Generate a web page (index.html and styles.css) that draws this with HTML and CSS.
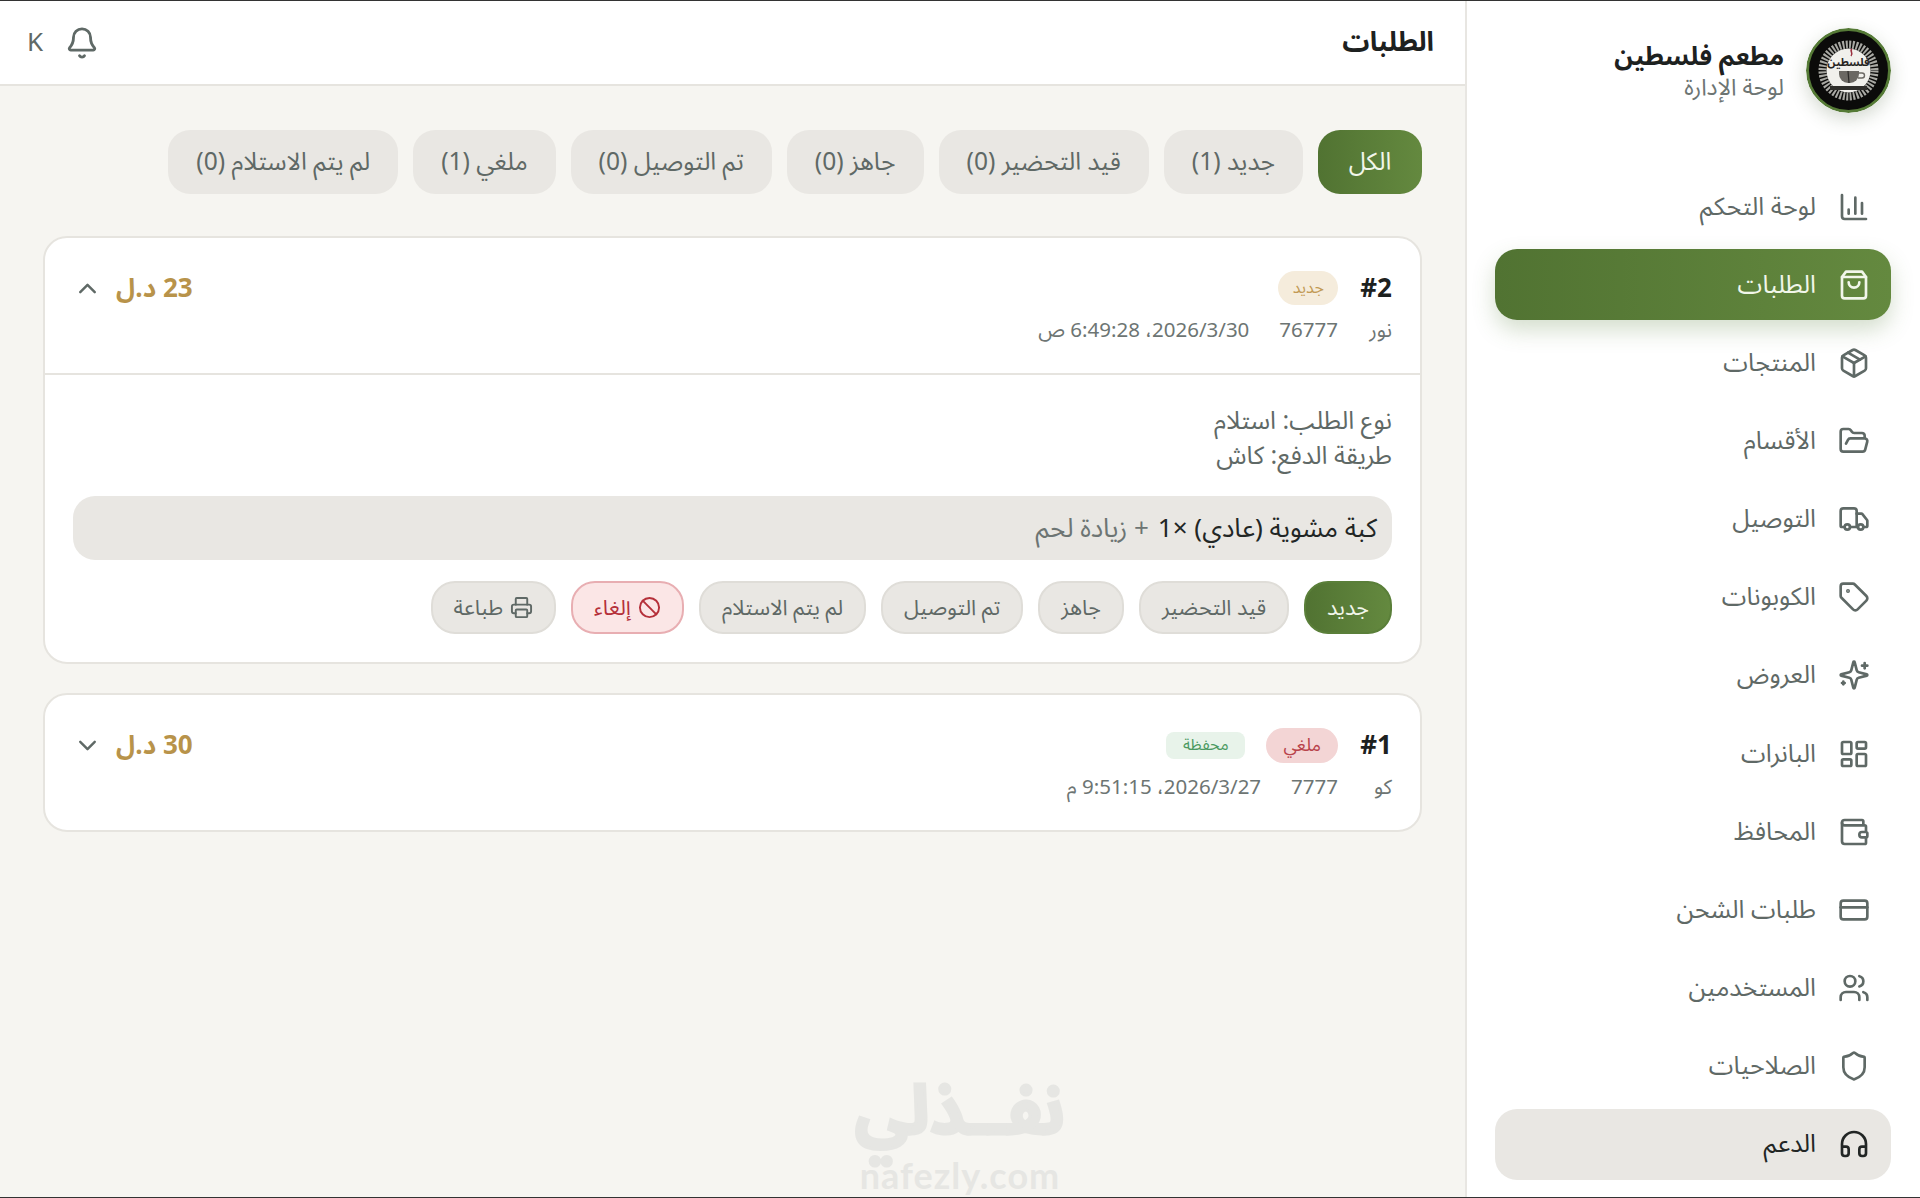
FILE: index.html
```html
<!DOCTYPE html>
<html lang="ar" dir="rtl">
<head>
<meta charset="UTF-8">
<title>الطلبات</title>
<link rel="stylesheet" href="styles.css">
</head>
<body>
<div class="app">

  <!-- القائمة الجانبية -->
  <aside class="sidebar">
    <div class="brand">
      <svg class="avatar" viewBox="0 0 85 85" aria-hidden="true">
        <circle cx="42.5" cy="42.5" r="41" fill="#0b0b0a" stroke="#557a36" stroke-width="3"/>
        <circle cx="42.5" cy="42.5" r="26" fill="none" stroke="#a8a8a3" stroke-width="8" stroke-dasharray="2 1.4"/>
        <circle cx="42.5" cy="42.5" r="22" fill="#f1f0ec"/>
        <text class="avatar-ar" x="42.5" y="38" text-anchor="middle">فلسطين</text>
        <path d="M46 21c-3 2 2 4-1 7" fill="none" stroke="#9c3140" stroke-width="1.6"/>
        <path d="M33 43h20v3a9 9 0 0 1-9 9h-2a9 9 0 0 1-9-9z" fill="#6b6863"/>
        <path d="M53 45h3a2.5 2.5 0 0 1 0 5h-4" fill="none" stroke="#6b6863" stroke-width="1.4"/>
        <path d="M42 43l1 12" stroke="#2b2a28" stroke-width="1.2"/>
        <rect x="24" y="58" width="37" height="4" fill="#2f2e2b"/>
      </svg>
      <div class="brand-text">
        <div class="brand-name">مطعم فلسطين</div>
        <div class="brand-sub">لوحة الإدارة</div>
      </div>
    </div>

    <nav class="nav">
      <a class="nav-item">
        <svg class="icon" viewBox="0 0 24 24"><path d="M3 3v16a2 2 0 0 0 2 2h16"/><path d="M18 17V9"/><path d="M13 17V5"/><path d="M8 17v-3"/></svg>
        <span>لوحة التحكم</span>
      </a>
      <a class="nav-item active">
        <svg class="icon" viewBox="0 0 24 24"><path d="M6 2 3 6v14a2 2 0 0 0 2 2h14a2 2 0 0 0 2-2V6l-3-4Z"/><path d="M3 6h18"/><path d="M16 10a4 4 0 0 1-8 0"/></svg>
        <span>الطلبات</span>
      </a>
      <a class="nav-item">
        <svg class="icon" viewBox="0 0 24 24"><path d="m7.5 4.27 9 5.15"/><path d="M21 8a2 2 0 0 0-1-1.73l-7-4a2 2 0 0 0-2 0l-7 4A2 2 0 0 0 3 8v8a2 2 0 0 0 1 1.73l7 4a2 2 0 0 0 2 0l7-4A2 2 0 0 0 21 16Z"/><path d="m3.3 7 8.7 5 8.7-5"/><path d="M12 22V12"/></svg>
        <span>المنتجات</span>
      </a>
      <a class="nav-item">
        <svg class="icon" viewBox="0 0 24 24"><path d="m6 14 1.5-2.9A2 2 0 0 1 9.24 10H20a2 2 0 0 1 1.94 2.5l-1.54 6a2 2 0 0 1-1.95 1.5H4a2 2 0 0 1-2-2V5a2 2 0 0 1 2-2h3.9a2 2 0 0 1 1.69.9l.81 1.2a2 2 0 0 0 1.67.9H18a2 2 0 0 1 2 2v2"/></svg>
        <span>الأقسام</span>
      </a>
      <a class="nav-item">
        <svg class="icon" viewBox="0 0 24 24"><path d="M14 18V6a2 2 0 0 0-2-2H4a2 2 0 0 0-2 2v11a1 1 0 0 0 1 1h2"/><path d="M15 18H9"/><path d="M19 18h2a1 1 0 0 0 1-1v-3.65a1 1 0 0 0-.22-.624l-3.48-4.35A1 1 0 0 0 17.52 8H14"/><circle cx="17" cy="18" r="2"/><circle cx="7" cy="18" r="2"/></svg>
        <span>التوصيل</span>
      </a>
      <a class="nav-item">
        <svg class="icon" viewBox="0 0 24 24"><path d="M12.586 2.586A2 2 0 0 0 11.172 2H4a2 2 0 0 0-2 2v7.172a2 2 0 0 0 .586 1.414l8.704 8.704a2.426 2.426 0 0 0 3.42 0l6.58-6.58a2.426 2.426 0 0 0 0-3.42z"/><circle cx="7.5" cy="7.5" r=".5" fill="currentColor"/></svg>
        <span>الكوبونات</span>
      </a>
      <a class="nav-item">
        <svg class="icon" viewBox="0 0 24 24"><path d="M9.937 15.5A2 2 0 0 0 8.5 14.063l-6.135-1.582a.5.5 0 0 1 0-.962L8.5 9.936A2 2 0 0 0 9.937 8.5l1.582-6.135a.5.5 0 0 1 .963 0L14.063 8.5A2 2 0 0 0 15.5 9.937l6.135 1.581a.5.5 0 0 1 0 .964L15.5 14.063a2 2 0 0 0-1.437 1.437l-1.582 6.135a.5.5 0 0 1-.963 0z"/><path d="M20 3v4"/><path d="M22 5h-4"/><path d="M4 17v2"/><path d="M5 18H3"/></svg>
        <span>العروض</span>
      </a>
      <a class="nav-item">
        <svg class="icon" viewBox="0 0 24 24"><rect x="3" y="3" width="7" height="9" rx="1"/><rect x="14" y="3" width="7" height="5" rx="1"/><rect x="14" y="12" width="7" height="9" rx="1"/><rect x="3" y="16" width="7" height="5" rx="1"/></svg>
        <span>البانرات</span>
      </a>
      <a class="nav-item">
        <svg class="icon" viewBox="0 0 24 24"><path d="M19 7V4a1 1 0 0 0-1-1H5a2 2 0 0 0 0 4h15a1 1 0 0 1 1 1v4h-3a2 2 0 0 0 0 4h3a1 1 0 0 0 1-1v-2a1 1 0 0 0-1-1"/><path d="M3 5v14a2 2 0 0 0 2 2h15a1 1 0 0 0 1-1v-4"/></svg>
        <span>المحافظ</span>
      </a>
      <a class="nav-item">
        <svg class="icon" viewBox="0 0 24 24"><rect x="2" y="5" width="20" height="14" rx="2"/><path d="M2 10h20"/></svg>
        <span>طلبات الشحن</span>
      </a>
      <a class="nav-item">
        <svg class="icon" viewBox="0 0 24 24"><path d="M16 21v-2a4 4 0 0 0-4-4H6a4 4 0 0 0-4 4v2"/><circle cx="9" cy="7" r="4"/><path d="M22 21v-2a4 4 0 0 0-3-3.87"/><path d="M16 3.13a4 4 0 0 1 0 7.75"/></svg>
        <span>المستخدمين</span>
      </a>
      <a class="nav-item">
        <svg class="icon" viewBox="0 0 24 24"><path d="M20 13c0 5-3.5 7.5-7.66 8.95a1 1 0 0 1-.67-.01C7.5 20.5 4 18 4 13V6a1 1 0 0 1 1-1c2 0 4.5-1.2 6.24-2.72a1.17 1.17 0 0 1 1.52 0C14.51 3.81 17 5 19 5a1 1 0 0 1 1 1z"/></svg>
        <span>الصلاحيات</span>
      </a>
      <a class="nav-item support">
        <svg class="icon" viewBox="0 0 24 24"><path d="M3 14h3a2 2 0 0 1 2 2v3a2 2 0 0 1-2 2H5a2 2 0 0 1-2-2v-7a9 9 0 0 1 18 0v7a2 2 0 0 1-2 2h-1a2 2 0 0 1-2-2v-3a2 2 0 0 1 2-2h3"/></svg>
        <span>الدعم</span>
      </a>
    </nav>
  </aside>

  <!-- المحتوى -->
  <main class="main">
    <header class="topbar">
      <h1>الطلبات</h1>
      <div class="top-actions">
        <svg class="icon bell" viewBox="0 0 24 24"><path d="M10.268 21a2 2 0 0 0 3.464 0"/><path d="M3.262 15.326A1 1 0 0 0 4 17h16a1 1 0 0 0 .74-1.673C19.41 13.956 18 12.499 18 8A6 6 0 0 0 6 8c0 4.499-1.411 5.956-2.738 7.326"/></svg>
        <span class="user-k">K</span>
      </div>
    </header>

    <section class="page">
      <div class="filters">
        <button class="chip on">الكل</button>
        <button class="chip">جديد (1)</button>
        <button class="chip">قيد التحضير (0)</button>
        <button class="chip">جاهز (0)</button>
        <button class="chip">تم التوصيل (0)</button>
        <button class="chip">ملغي (1)</button>
        <button class="chip">لم يتم الاستلام (0)</button>
      </div>

      <article class="order">
        <div class="order-head">
          <div class="order-info">
            <div class="order-title">
              <b class="order-no">#2</b>
              <span class="badge new">جديد</span>
            </div>
            <div class="order-meta">
              <span>نور</span>
              <span>76777</span>
              <span>2026/3/30، 6:49:28 ص</span>
            </div>
          </div>
          <div class="order-total">
            <b>23 د.ل</b>
            <svg class="chev" viewBox="0 0 24 24"><path d="m18 15-6-6-6 6"/></svg>
          </div>
        </div>
        <div class="order-body">
          <p class="order-line">نوع الطلب: استلام</p>
          <p class="order-line">طريقة الدفع: كاش</p>
          <div class="item-row"><b>كبة مشوية (عادي) ×1</b> <span>+ زيادة لحم</span></div>
          <div class="actions">
            <button class="act on">جديد</button>
            <button class="act">قيد التحضير</button>
            <button class="act">جاهز</button>
            <button class="act">تم التوصيل</button>
            <button class="act">لم يتم الاستلام</button>
            <button class="act danger">
              <svg class="act-icon" viewBox="0 0 24 24"><circle cx="12" cy="12" r="10"/><path d="m4.9 4.9 14.2 14.2"/></svg>
              إلغاء
            </button>
            <button class="act">
              <svg class="act-icon" viewBox="0 0 24 24"><path d="M6 18H4a2 2 0 0 1-2-2v-5a2 2 0 0 1 2-2h16a2 2 0 0 1 2 2v5a2 2 0 0 1-2 2h-2"/><path d="M6 9V3a1 1 0 0 1 1-1h10a1 1 0 0 1 1 1v6"/><rect x="6" y="14" width="12" height="8" rx="1"/></svg>
              طباعة
            </button>
          </div>
        </div>
      </article>

      <article class="order">
        <div class="order-head closed">
          <div class="order-info">
            <div class="order-title">
              <b class="order-no">#1</b>
              <span class="badge cancelled">ملغي</span>
              <span class="badge wallet">محفظة</span>
            </div>
            <div class="order-meta">
              <span>كو</span>
              <span>7777</span>
              <span>2026/3/27، 9:51:15 م</span>
            </div>
          </div>
          <div class="order-total">
            <b>30 د.ل</b>
            <svg class="chev" viewBox="0 0 24 24"><path d="m6 9 6 6 6-6"/></svg>
          </div>
        </div>
      </article>
    </section>
  </main>

  <div class="watermark">
    <div class="wm-ar">نفــذلي</div>
    <div class="wm-en">nafezly.com</div>
  </div>
</div>
</body>
</html>
```
FILE: styles.css
```css
/* ─── Reset ─── */
*,*::before,*::after{box-sizing:border-box;margin:0;padding:0}
html,body{height:100%}
body{font-family:"Noto Sans Arabic","DejaVu Sans",sans-serif;background:#f6f5f1;color:#5f6966;overflow:hidden}
button{font-family:inherit}

.app{position:relative;display:flex;height:1198px;border-top:1px solid #333;border-bottom:1px solid #333}

.icon{width:32px;height:32px;flex:none;fill:none;stroke:currentColor;stroke-width:2;stroke-linecap:round;stroke-linejoin:round}

/* ─── Sidebar ─── */
.sidebar{width:455px;flex:none;background:#fff;border-left:2px solid #e8e6e2;padding:27px 29px 0 28px}
.brand{display:flex;align-items:center;gap:22px;margin-bottom:58px}
.avatar{width:85px;height:85px;flex:none;border-radius:50%;box-shadow:0 6px 18px rgba(60,80,40,.22)}
.avatar-ar{font-size:11px;font-weight:700;fill:#26241f}
.brand-name{font-size:25.5px;font-weight:700;color:#1d2120;line-height:34px}
.brand-sub{font-size:23px;color:#6d7573;line-height:28px}

.nav{display:flex;flex-direction:column;gap:7.17px}
.nav-item{height:71px;display:flex;align-items:center;gap:22px;padding:0 21px;border-radius:22px;font-size:25px;color:#5f6966}
.nav-item.active{background:linear-gradient(270deg,#64893f,#517332);color:#f1f6ea;box-shadow:0 10px 22px rgba(85,122,54,.25)}
.nav-item.support{background:#e9e7e3;color:#222625}

/* ─── Main ─── */
.main{flex:1;min-width:0;display:flex;flex-direction:column}
.topbar{height:85px;flex:none;background:#fff;border-bottom:2px solid #e6e4df;display:flex;align-items:center;justify-content:space-between;padding:0 31px 0 27px}
.topbar h1{font-size:27px;font-weight:700;color:#1d2120}
.top-actions{display:flex;align-items:center;gap:22px}
.bell{width:34px;height:34px}
.user-k{font-size:26px;color:#5f6966}

.page{flex:1;padding:44px 43px 0 43px;display:flex;flex-direction:column}

.filters{display:flex;gap:15px;margin-bottom:42px}
.chip{height:64px;min-width:104px;padding:0 28px;border:0;border-radius:22px;background:#e9e7e3;color:#5f6966;font-size:24.6px;white-space:nowrap}
.chip.on{background:linear-gradient(270deg,#64893f,#517332);color:#f1f6ea}

/* ─── Orders ─── */
.order{background:#fff;border:2px solid #e6e4df;border-radius:24px;margin-bottom:29px}
.order-head{height:137px;display:flex;justify-content:space-between;padding:0 28px;border-bottom:2px solid #e6e4df}
.order-head.closed{height:135px;border-bottom:0}
.order-info{padding-top:32px}
.order-title{display:flex;align-items:center;gap:22px;height:36px}
.order-no{font-size:26px;color:#1d2120}
.badge{font-size:16px;display:flex;align-items:center;justify-content:center}
.badge.new{width:60px;height:34px;border-radius:17px;background:#f5ecdc;color:#c29a55}
.badge.cancelled{width:72px;height:35px;border-radius:18px;background:#f3d5d5;color:#b8434a;font-size:18px}
.badge.wallet{width:79px;height:27px;border-radius:8px;background:#e8f3ea;color:#4c9a62;margin-inline-start:-1px}
.order-meta{display:flex;gap:30px;font-size:20.5px;color:#6d7573;margin-top:11px;line-height:28px}
.order-meta span:first-child{min-width:24px}
.order-total{display:flex;align-items:center;gap:14px;height:36px;margin-top:32px}
.order-total b{font-size:26px;color:#b8934a}
.chev{width:29px;height:29px;fill:none;stroke:#5f6966;stroke-width:2;stroke-linecap:round;stroke-linejoin:round}

.order-body{padding:29px 28px 28px}
.order-line{font-size:25px;line-height:35px;color:#5f6966}
.item-row{height:64px;display:flex;align-items:center;gap:9px;padding:0 15px;margin-top:22px;border-radius:22px;background:#e9e7e3;font-size:26px}
.item-row b{font-weight:400;color:#222625}
.item-row span{color:#6d7573}

.actions{display:flex;gap:15px;margin-top:21px}
.act{height:53px;padding:0 21px;display:flex;align-items:center;gap:7px;border:2px solid #dfddd8;border-radius:24px;background:#e9e7e3;color:#5f6966;font-size:21.5px;white-space:nowrap}
.act.on{background:linear-gradient(270deg,#64893f,#517332);border-color:#5a7f39;color:#f1f6ea}
.act.danger{background:#fbe6e6;border-color:#e8aeb2;color:#b5303a}
.act-icon{width:23px;height:23px;flex:none;fill:none;stroke:currentColor;stroke-width:2;stroke-linecap:round;stroke-linejoin:round}

/* ─── Watermark ─── */
.watermark{position:absolute;left:0;right:0;bottom:2px;text-align:center;color:#e6e6e3;font-weight:700;pointer-events:none}
.wm-ar{font-size:68px;line-height:84px;-webkit-text-stroke:3px #e6e6e3}
.wm-en{font-family:"Lato",sans-serif;font-size:36px;line-height:40px;letter-spacing:1px}
```
